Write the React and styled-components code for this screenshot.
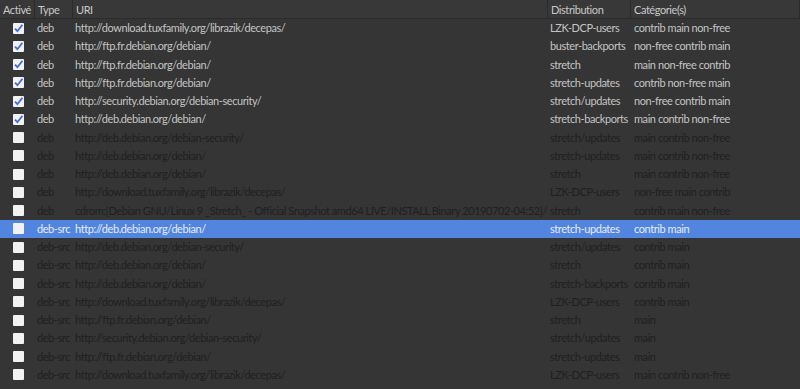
import React from 'react'
import styled, { createGlobalStyle } from 'styled-components'

const Global = createGlobalStyle`
  html, body {
    margin: 0;
    padding: 0;
    background: #353535;
    font-family: Lato, "Open Sans", "DejaVu Sans", sans-serif;
    overflow: hidden;
  }
`

const sources = [
  [true, 'deb', 'http://download.tuxfamily.org/librazik/decepas/', 'LZK-DCP-users', 'contrib main non-free'],
  [true, 'deb', 'http://ftp.fr.debian.org/debian/', 'buster-backports', 'non-free contrib main'],
  [true, 'deb', 'http://ftp.fr.debian.org/debian/', 'stretch', 'main non-free contrib'],
  [true, 'deb', 'http://ftp.fr.debian.org/debian/', 'stretch-updates', 'contrib non-free main'],
  [true, 'deb', 'http://security.debian.org/debian-security/', 'stretch/updates', 'non-free contrib main'],
  [true, 'deb', 'http://deb.debian.org/debian/', 'stretch-backports', 'main contrib non-free'],
  [false, 'deb', 'http://deb.debian.org/debian-security/', 'stretch/updates', 'main contrib non-free'],
  [false, 'deb', 'http://deb.debian.org/debian/', 'stretch-updates', 'main contrib non-free'],
  [false, 'deb', 'http://deb.debian.org/debian/', 'stretch', 'main contrib non-free'],
  [false, 'deb', 'http://download.tuxfamily.org/librazik/decepas/', 'LZK-DCP-users', 'non-free main contrib'],
  [false, 'deb', 'cdrom:[Debian GNU/Linux 9 _Stretch_ - Official Snapshot amd64 LIVE/INSTALL Binary 20190702-04:52]/', 'stretch', 'contrib main non-free'],
  [false, 'deb-src', 'http://deb.debian.org/debian/', 'stretch-updates', 'contrib main', true],
  [false, 'deb-src', 'http://deb.debian.org/debian-security/', 'stretch/updates', 'contrib main'],
  [false, 'deb-src', 'http://deb.debian.org/debian/', 'stretch', 'contrib main'],
  [false, 'deb-src', 'http://deb.debian.org/debian/', 'stretch-backports', 'contrib main'],
  [false, 'deb-src', 'http://download.tuxfamily.org/librazik/decepas/', 'LZK-DCP-users', 'contrib main'],
  [false, 'deb-src', 'http://ftp.fr.debian.org/debian/', 'stretch', 'main'],
  [false, 'deb-src', 'http://security.debian.org/debian-security/', 'stretch/updates', 'main'],
  [false, 'deb-src', 'http://ftp.fr.debian.org/debian/', 'stretch-updates', 'main'],
  [false, 'deb-src', 'http://download.tuxfamily.org/librazik/decepas/', 'LZK-DCP-users', 'main contrib non-free'],
]

const cols = '35px 38px 475px 83px 1fr'

const View = styled.div`
  width: 800px;
  height: 389px;
  background: #353535;
  font-size: 11px;
  letter-spacing: -0.43px;
`

const Header = styled.div`
  display: grid;
  grid-template-columns: ${cols};
  height: 19px;
  border-bottom: 1px solid #2b2b2b;
  box-sizing: border-box;
`

const HeadCell = styled.div`
  display: flex;
  align-items: center;
  padding-left: 3px;
  color: #c8c8c8;
  background: #383838;
  border-right: 1px solid #2b2b2b;
  white-space: nowrap;
  overflow: hidden;
`

const Row = styled.div`
  display: grid;
  grid-template-columns: ${cols};
  height: 18.25px;
  align-items: center;
  background: ${p => (p.$selected ? '#5285e0' : 'transparent')};
  color: ${p => (p.$selected ? '#e6ecfa' : p.$active ? '#c4c4c4' : '#1f1f1f')};
`

const Cell = styled.div`
  padding-left: ${p => p.$pad || 2}px;
  white-space: nowrap;
  overflow: hidden;
  line-height: 18px;
`

const CheckCell = styled.div`
  display: flex;
  justify-content: center;
  padding-left: 2px;
`

const Box = styled.span`
  width: 11px;
  height: 11px;
  background: #f2f2f2;
  border-radius: 1px;
  display: flex;
  align-items: center;
  justify-content: center;
`

const Check = ({ on }) => (
  <Box>
    {on && (
      <svg width="9" height="9" viewBox="0 0 9 9">
        <path d="M1 4.6 L3.4 7.2 L8.4 0.8" fill="none" stroke="#3f6fd8" strokeWidth="1.8" />
      </svg>
    )}
  </Box>
)

export default function App() {
  return (
    <>
      <Global />
      <View>
        <Header>
          <HeadCell>Activé</HeadCell>
          <HeadCell>Type</HeadCell>
          <HeadCell>URI</HeadCell>
          <HeadCell>Distribution</HeadCell>
          <HeadCell>Catégorie(s)</HeadCell>
        </Header>
        {sources.map(([on, type, uri, dist, cat, sel], i) => (
          <Row key={i} $active={on} $selected={sel}>
            <CheckCell><Check on={on} /></CheckCell>
            <Cell>{type}</Cell>
            <Cell>{uri}</Cell>
            <Cell>{dist}</Cell>
            <Cell $pad={3}>{cat}</Cell>
          </Row>
        ))}
      </View>
    </>
  )
}
